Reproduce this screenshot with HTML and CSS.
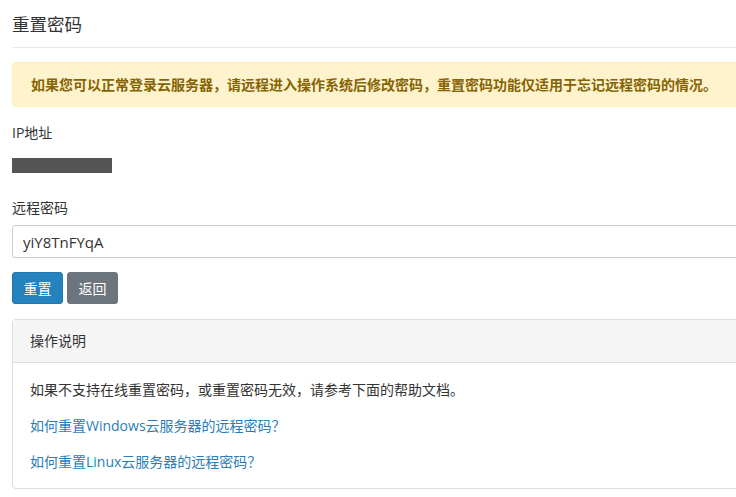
FILE: index.html
```html
<!DOCTYPE html>
<html lang="zh-CN">
<head>
  <meta charset="UTF-8">
  <meta name="viewport" content="width=device-width, initial-scale=1.0">
  <title>重置密码</title>
  <link rel="stylesheet" href="styles.css">
</head>
<body>

<div class="page">
  <div class="page-header">
    <h1>重置密码</h1>
  </div>

  <div class="alert">如果您可以正常登录云服务器，请远程进入操作系统后修改密码，重置密码功能仅适用于忘记远程密码的情况。</div>

  <div class="form-group">
    <label>IP地址</label>
    <div class="masked"></div>
  </div>

  <div class="form-group">
    <label for="password">远程密码</label>
    <input type="text" id="password" class="form-control" value="yiY8TnFYqA">
  </div>

  <div class="actions">
    <button class="btn btn-primary">重置</button>
    <button class="btn btn-secondary">返回</button>
  </div>

  <div class="panel">
    <div class="panel-heading">操作说明</div>
    <div class="panel-body">
      <p>如果不支持在线重置密码，或重置密码无效，请参考下面的帮助文档。</p>
      <p><a href="#">如何重置Windows云服务器的远程密码？</a></p>
      <p><a href="#">如何重置Linux云服务器的远程密码？</a></p>
    </div>
  </div>
</div>

</body>
</html>
```

FILE: styles.css
```css
html, body {
  overflow: hidden;
}

body {
  margin: 0;
  padding: 0;
  font-family: "Open Sans", "Noto Sans CJK SC", sans-serif;
  font-size: 14px;
  line-height: 20px;
  color: #333;
  background-color: #fff;
}

.page {
  width: 780px;
  padding: 0 12px;
}

.page-header {
  border-bottom: 1px solid #e6e8ec;
  padding: 12px 0 11px;
}

.page-header h1 {
  margin: 0;
  font-size: 17.5px;
  font-weight: normal;
  line-height: 24px;
  color: #333;
}

.alert {
  margin-top: 14px;
  padding: 12px 18px;
  line-height: 19px;
  background-color: #fff3cd;
  border: 1px solid #ffeeba;
  border-radius: 4px;
  color: #856404;
  font-weight: bold;
}

.form-group {
  margin-top: 16px;
}

.form-group label {
  display: block;
  line-height: 20px;
}

.masked {
  width: 100px;
  height: 15px;
  margin-top: 15px;
  margin-bottom: 8px;
  background-color: #555;
}

.form-group + .form-group {
  margin-top: 25px;
}

.form-control {
  display: block;
  box-sizing: border-box;
  width: 100%;
  height: 33px;
  margin-top: 7px;
  padding: 0 10px;
  font-family: inherit;
  font-size: 15px;
  color: #333;
  border: 1px solid #ccc;
  border-radius: 3px;
  outline: none;
}

.actions {
  display: flex;
  gap: 4px;
  margin-top: 14px;
}

.btn {
  width: 51px;
  height: 32px;
  padding: 0;
  font-family: inherit;
  font-size: 14px;
  color: #fff;
  border: 1px solid transparent;
  border-radius: 3px;
  cursor: pointer;
}

.btn-primary {
  background-color: #2482bc;
  border-color: #2279b0;
}

.btn-secondary {
  background-color: #6c757d;
  border-color: #6c757d;
}

.panel {
  margin-top: 15px;
  border: 1px solid #ddd;
  border-radius: 4px;
}

.panel-heading {
  padding: 11px 17px;
  background-color: #f5f5f5;
  border-bottom: 1px solid #ddd;
}

.panel-body {
  padding: 17px 17px 16px;
}

.panel-body p {
  margin: 0 0 16px;
}

.panel-body p:last-child {
  margin-bottom: 0;
}

.panel-body a {
  color: #2a7dba;
  text-decoration: none;
}
```
